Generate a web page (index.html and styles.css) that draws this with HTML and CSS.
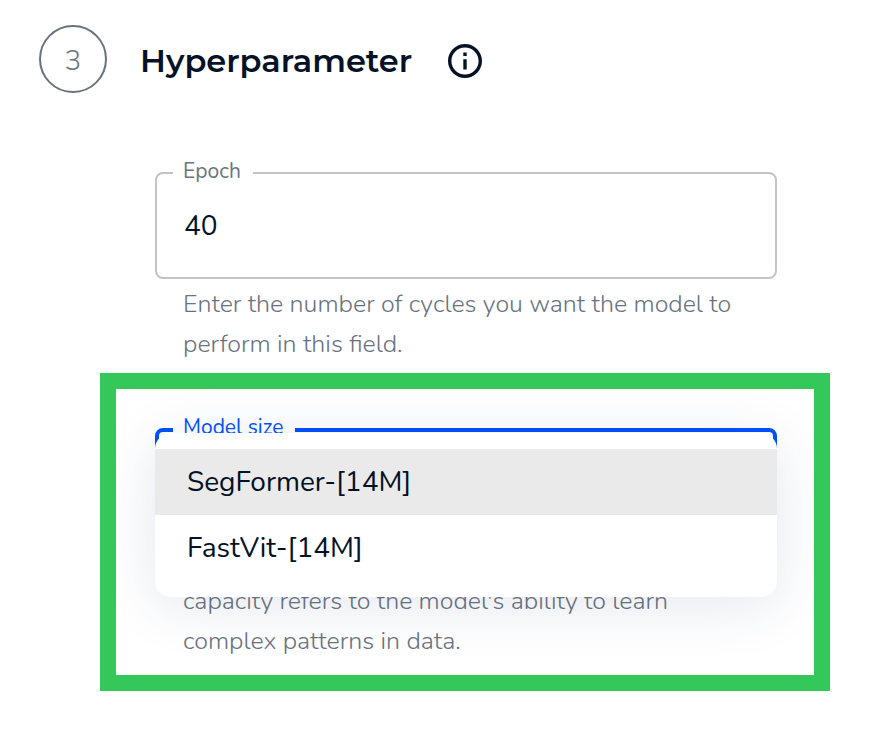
FILE: index.html
```
<!DOCTYPE html>
<html lang="en">
<head>
  <meta charset="UTF-8">
  <meta name="viewport" content="width=device-width, initial-scale=1.0">
  <title>Hyperparameter</title>
  <link rel="stylesheet" href="styles.css">
</head>
<body>
  <header class="step-header">
    <span class="step-number">3</span>
    <h1>Hyperparameter</h1>
    <button type="button" class="info" aria-label="Info">
      <svg viewBox="2 2 20 20" width="34" height="34" fill="currentColor">
        <path d="M11 7h2v2h-2zM11 11h2v6h-2zM12 2C6.48 2 2 6.48 2 12s4.48 10 10 10 10-4.48 10-10S17.52 2 12 2zm0 18c-4.41 0-8-3.59-8-8s3.59-8 8-8 8 3.59 8 8-3.59 8-8 8z"/>
      </svg>
    </button>
  </header>

  <form>
    <div class="field-group">
      <div class="field">
        <label for="epoch">Epoch</label>
        <input type="text" id="epoch" name="epoch" value="40" inputmode="numeric">
      </div>
      <p class="helper">Enter the number of cycles you want the model to perform in this field.</p>
    </div>

    <section class="highlight">
      <div class="field focused">
        <label for="modelSize">Model size</label>
        <select id="modelSize" name="modelSize">
          <option>SegFormer-[14M]</option>
          <option>FastVit-[14M]</option>
        </select>
        <div class="menu" role="listbox" aria-label="Model size">
          <button type="button" role="option" aria-selected="true" class="selected">SegFormer-[14M]</button>
          <button type="button" role="option" aria-selected="false">FastVit-[14M]</button>
        </div>
      </div>
      <p class="helper">capacity refers to the model's ability to learn complex patterns in data.</p>
    </section>
  </form>
</body>
</html>
```
FILE: styles.css
```
* {
  box-sizing: border-box;
}
body {
  margin: 0;
  background: #fff;
  color: #031226;
  font-family: Nunito, "Open Sans", sans-serif;
}
.step-header {
  display: flex;
  align-items: center;
  padding: 25px 39px 0;
}
.step-number {
  display: flex;
  align-items: center;
  justify-content: center;
  width: 68px;
  height: 68px;
  margin-right: 33px;
  padding-top: 4px;
  border: 2px solid #697380;
  border-radius: 50%;
  color: #697380;
  font-size: 28px;
  font-weight: 300;
}
h1 {
  margin: 0;
  padding-top: 2px;
  font-family: Montserrat, Inter, sans-serif;
  font-size: 32px;
  font-weight: 600;
}
.info {
  display: flex;
  margin-left: 36px;
  padding: 4px 0 0;
  border: none;
  background: none;
  color: inherit;
  cursor: pointer;
}
form {
  margin: 79px 52px 39px 100px;
}
.field-group {
  margin: 0 53px 9px 55px;
}
.field {
  position: relative;
}
.field label {
  position: absolute;
  top: -15px;
  left: 18px;
  padding: 0 12px 0 10px;
  background: #fff;
  color: #697380;
  font-size: 21px;
  line-height: 28px;
}
.field input,
.field select {
  display: block;
  width: 100%;
  height: 107px;
  padding: 0 27px;
  border: 2px solid #c4c4c4;
  border-radius: 8px;
  outline: none;
  appearance: none;
  background: #fff;
  color: inherit;
  font-family: inherit;
  font-size: 28px;
}
.field.focused select {
  border: 4px solid #0050ff;
}
.field.focused label {
  color: #0050ff;
}
.helper {
  margin: 5px 0 0;
  padding: 0 28px;
  color: #697380;
  font-size: 25px;
  font-weight: 300;
  line-height: 40px;
}
.highlight {
  overflow: hidden;
  padding: 39px 37px 14px 39px;
  border: 16px solid #34c759;
}
/* the open menu hangs below the field */
.highlight .helper {
  margin-top: 46px;
}
.menu {
  position: absolute;
  top: 5px;
  left: 0;
  width: 100%;
  padding: 16px 0;
  border-radius: 16px;
  background: #fff;
  box-shadow: 0 8px 56px rgba(30, 60, 110, 0.12);
}
.menu button {
  display: block;
  width: 100%;
  height: 66px;
  padding: 0 32px;
  border: none;
  background: none;
  color: inherit;
  font-family: inherit;
  font-size: 28px;
  text-align: left;
  cursor: pointer;
}
.menu button.selected {
  background: #eaeaea;
}
```
